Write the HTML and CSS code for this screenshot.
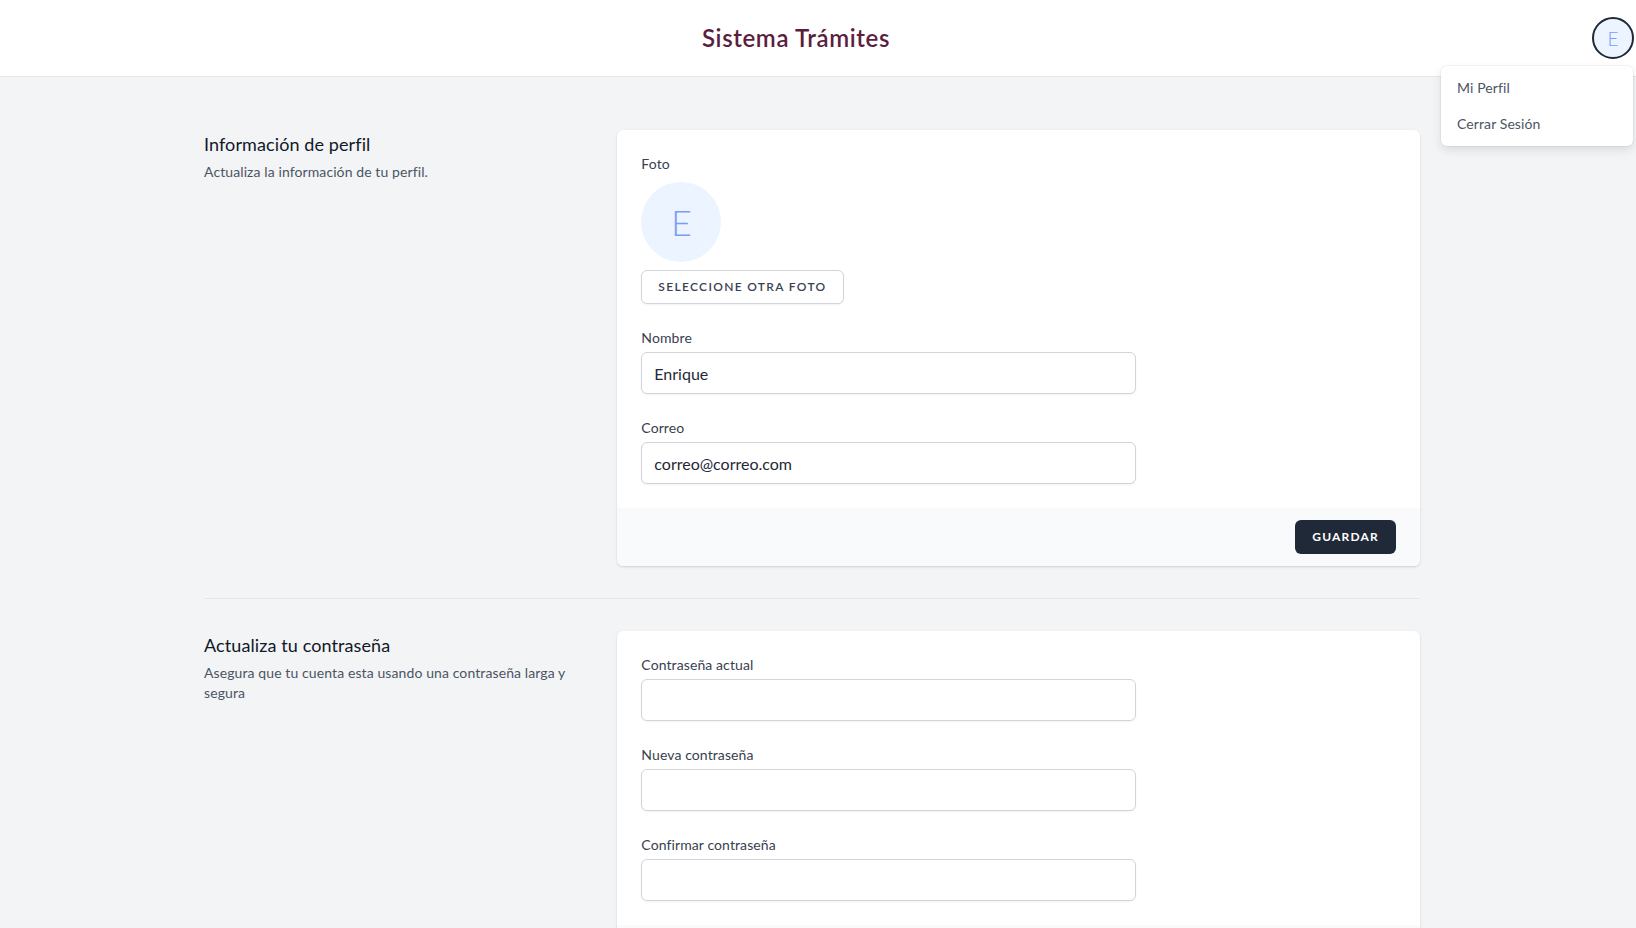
FILE: index.html
```html
<!DOCTYPE html>
<html lang="es">
<head>
<meta charset="utf-8">
<title>Sistema Trámites</title>
<link rel="stylesheet" href="styles.css">
</head>
<body>
<header class="topbar">
  <h1 class="brand">Sistema Trámites</h1>
  <div class="user">
    <button class="user-avatar">E</button>
    <div class="menu">
      <a class="menu-item" href="#">Mi Perfil</a>
      <a class="menu-item" href="#">Cerrar Sesión</a>
    </div>
  </div>
</header>

<main class="page">
  <section class="section">
    <div class="section-intro">
      <h3 class="section-title">Información de perfil</h3>
      <p class="section-desc">Actualiza la información de tu perfil.</p>
    </div>
    <form class="card">
      <div class="card-body">
        <div class="field">
          <label class="label">Foto</label>
          <div class="photo">E</div>
          <button type="button" class="btn-secondary">Seleccione otra foto</button>
        </div>
        <div class="field">
          <label class="label">Nombre</label>
          <input class="input" type="text" value="Enrique">
        </div>
        <div class="field">
          <label class="label">Correo</label>
          <input class="input" type="email" value="correo@correo.com">
        </div>
      </div>
      <div class="card-footer">
        <button type="button" class="btn-primary">Guardar</button>
      </div>
    </form>
  </section>

  <div class="divider"></div>

  <section class="section">
    <div class="section-intro">
      <h3 class="section-title">Actualiza tu contraseña</h3>
      <p class="section-desc">Asegura que tu cuenta esta usando una contraseña larga y segura</p>
    </div>
    <form class="card">
      <div class="card-body">
        <div class="field">
          <label class="label">Contraseña actual</label>
          <input class="input" type="password">
        </div>
        <div class="field">
          <label class="label">Nueva contraseña</label>
          <input class="input" type="password">
        </div>
        <div class="field">
          <label class="label">Confirmar contraseña</label>
          <input class="input" type="password">
        </div>
      </div>
      <div class="card-footer">
        <button type="button" class="btn-primary">Guardar</button>
      </div>
    </form>
  </section>
</main>
</body>
</html>
```
FILE: styles.css
```css
* { box-sizing: border-box; }
html, body { margin: 0; padding: 0; }
body {
  font-family: Lato, "Noto Sans", sans-serif;
  background: #f3f4f6;
  color: #111827;
}
.topbar {
  height: 77px;
  background: #fff;
  border-bottom: 1px solid #e3e5e9;
  display: flex;
  align-items: center;
  padding-right: 2px;
  position: relative;
}
.brand {
  flex: 1;
  margin: 0;
  text-align: center;
  font-size: 24px;
  font-weight: 600;
  letter-spacing: 0.6px;
  color: #5c1e3e;
  line-height: 32px;
}
.user { position: relative; }
.user-avatar {
  width: 42px;
  height: 42px;
  border-radius: 50%;
  border: 2px solid #1f2937;
  background: #ebf4ff;
  color: #7f9cf5;
  font-family: Lato, sans-serif;
  font-weight: 300;
  font-size: 19px;
  padding: 0;
  display: flex;
  align-items: center;
  justify-content: center;
}
.menu {
  position: absolute;
  right: 1px;
  top: 49px;
  width: 192px;
  background: #fff;
  border-radius: 6px;
  box-shadow: 0 4px 10px rgba(0,0,0,0.10), 0 0 0 1px rgba(0,0,0,0.04);
  padding: 4px 0;
  z-index: 10;
}
.menu-item {
  display: block;
  padding: 8px 16px;
  font-size: 14px;
  line-height: 20px;
  color: #4b5563;
  text-decoration: none;
  letter-spacing: 0.1px;
}
.page {
  width: 1216px;
  margin-left: 204px;
  padding-top: 53px;
}
.section {
  display: grid;
  grid-template-columns: repeat(3, 1fr);
  column-gap: 24px;
}
.section-title {
  margin: 0;
  font-size: 18px;
  line-height: 28px;
  font-weight: 400;
  color: #111827;
  letter-spacing: 0.1px;
}
.section-desc {
  margin: 4px 0 0;
  font-size: 14px;
  line-height: 20px;
  color: #4b5563;
  letter-spacing: 0.1px;
}
.card {
  grid-column: span 2;
  background: #fff;
  border-radius: 6px;
  box-shadow: 0 1px 3px rgba(0,0,0,0.1), 0 1px 2px rgba(0,0,0,0.06);
  overflow: hidden;
}
.card-body {
  padding: 24px;
  display: grid;
  grid-template-columns: repeat(6, 1fr);
  gap: 24px;
}
.field {
  grid-column: span 4;
  display: flex;
  flex-direction: column;
  align-items: flex-start;
}
.label {
  font-size: 14px;
  line-height: 20px;
  font-weight: 400;
  color: #374151;
  letter-spacing: 0.1px;
}
.photo {
  margin-top: 8px;
  width: 80px;
  height: 80px;
  border-radius: 50%;
  background: #ebf4ff;
  color: #7f9cf5;
  font-weight: 300;
  font-size: 36px;
  display: flex;
  align-items: center;
  justify-content: center;
}
.btn-secondary {
  margin-top: 8px;
  background: #fff;
  border: 1px solid #d1d5db;
  border-radius: 6px;
  padding: 8px 16px;
  font-family: inherit;
  font-size: 12px;
  line-height: 16px;
  font-weight: 600;
  text-transform: uppercase;
  letter-spacing: 0.11em;
  color: #374151;
  box-shadow: 0 1px 2px rgba(0,0,0,0.05);
}
.input {
  margin-top: 4px;
  width: 100%;
  height: 42px;
  border: 1px solid #d1d5db;
  border-radius: 6px;
  padding: 8px 12px;
  font-family: inherit;
  font-size: 16px;
  line-height: 24px;
  color: #1f2937;
  box-shadow: 0 1px 2px rgba(0,0,0,0.05);
  background: #fff;
}
.card-footer {
  background: #f9fafb;
  padding: 12px 24px;
  display: flex;
  justify-content: flex-end;
}
.btn-primary {
  background: #1f2937;
  color: #fff;
  border: 1px solid transparent;
  border-radius: 6px;
  padding: 8px 16px;
  font-family: inherit;
  font-size: 12px;
  line-height: 16px;
  font-weight: 700;
  text-transform: uppercase;
  letter-spacing: 0.1em;
}
.divider {
  padding: 32px 0;
}
.divider::before {
  content: "";
  display: block;
  border-top: 1px solid #e5e7eb;
}
```
